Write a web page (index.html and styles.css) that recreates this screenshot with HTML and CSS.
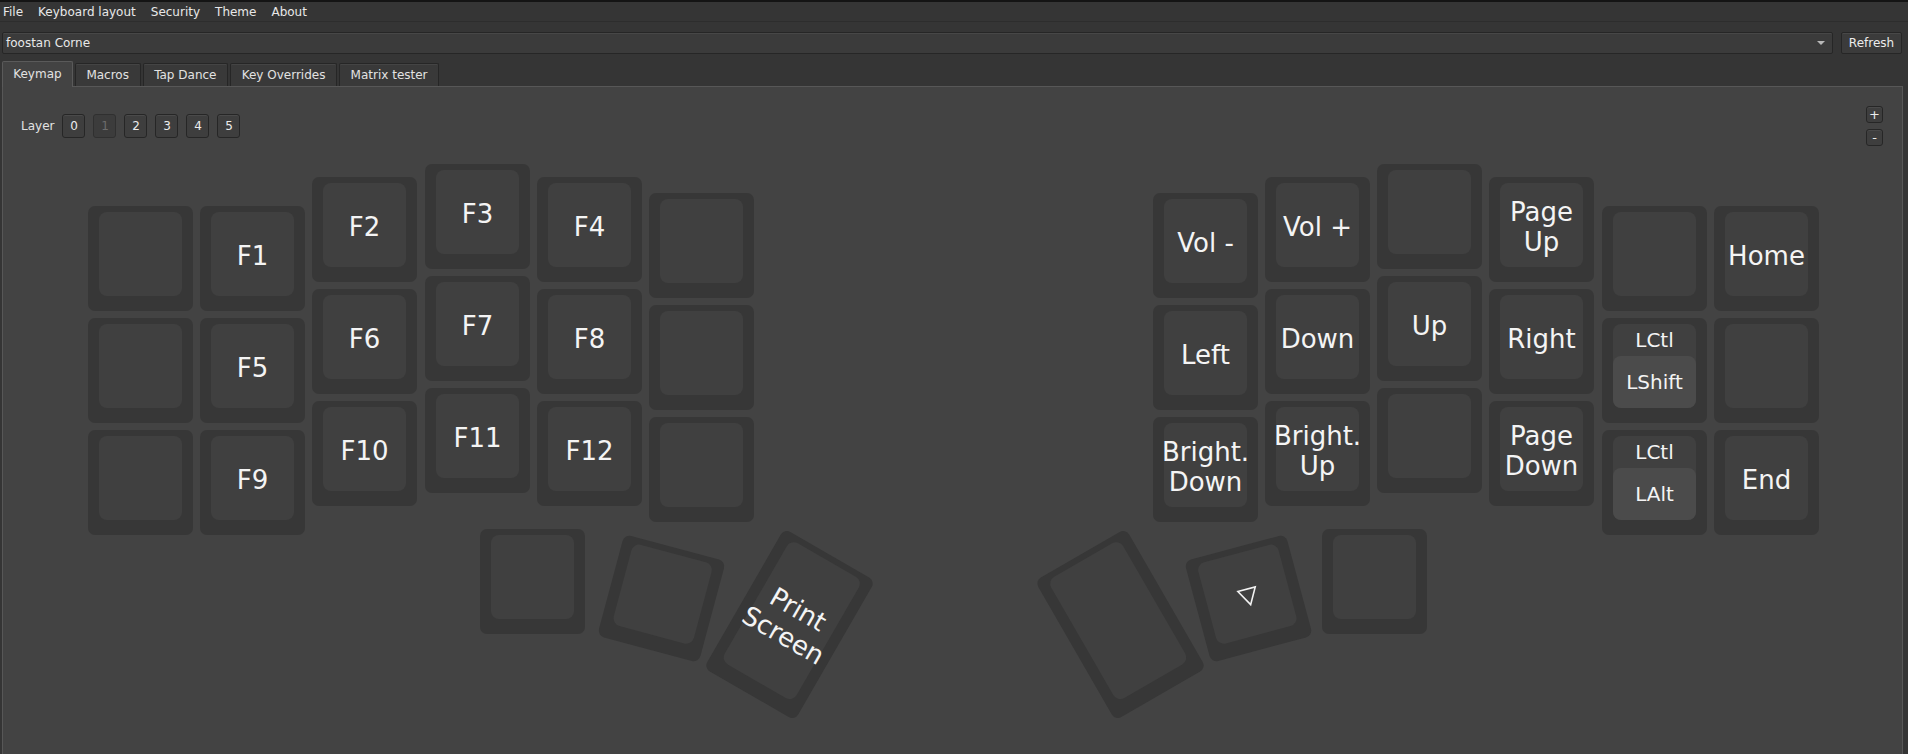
FILE: index.html
```html
<!DOCTYPE html>
<html>
<head>
<meta charset="utf-8">
<link rel="stylesheet" href="styles.css">
</head>
<body>
<div class="topline"></div>
<div class="menubar">
  <span class="menu">File</span>
  <span class="menu">Keyboard layout</span>
  <span class="menu">Security</span>
  <span class="menu">Theme</span>
  <span class="menu">About</span>
</div>
<div class="devrow">
  <div class="combo"><span>foostan Corne</span><span class="arrow"></span></div>
  <button class="btn refresh">Refresh</button>
</div>
<div class="tabs">
  <div class="tab active">Keymap</div>
  <div class="tab">Macros</div>
  <div class="tab">Tap Dance</div>
  <div class="tab">Key Overrides</div>
  <div class="tab">Matrix tester</div>
</div>
<div class="panel">
  <div class="panel-top">
    <div class="layers">
      <span class="layer-label">Layer</span>
      <button class="lbtn">0</button>
      <button class="lbtn disabled">1</button>
      <button class="lbtn">2</button>
      <button class="lbtn">3</button>
      <button class="lbtn">4</button>
      <button class="lbtn">5</button>
    </div>
    <div class="zoom">
      <button class="zbtn">+</button>
      <button class="zbtn">-</button>
    </div>
  </div>
  <div class="keyboard">
    <!-- left half -->
    <div class="key" style="left:85px;top:56px"><div class="cap"></div></div>
    <div class="key" style="left:85px;top:168px"><div class="cap"></div></div>
    <div class="key" style="left:85px;top:280px"><div class="cap"></div></div>

    <div class="key" style="left:197px;top:56px"><div class="cap">F1</div></div>
    <div class="key" style="left:197px;top:168px"><div class="cap">F5</div></div>
    <div class="key" style="left:197px;top:280px"><div class="cap">F9</div></div>

    <div class="key" style="left:309px;top:27px"><div class="cap">F2</div></div>
    <div class="key" style="left:309px;top:139px"><div class="cap">F6</div></div>
    <div class="key" style="left:309px;top:251px"><div class="cap">F10</div></div>

    <div class="key" style="left:422px;top:14px"><div class="cap">F3</div></div>
    <div class="key" style="left:422px;top:126px"><div class="cap">F7</div></div>
    <div class="key" style="left:422px;top:238px"><div class="cap">F11</div></div>

    <div class="key" style="left:534px;top:27px"><div class="cap">F4</div></div>
    <div class="key" style="left:534px;top:139px"><div class="cap">F8</div></div>
    <div class="key" style="left:534px;top:251px"><div class="cap">F12</div></div>

    <div class="key" style="left:646px;top:43px"><div class="cap"></div></div>
    <div class="key" style="left:646px;top:155px"><div class="cap"></div></div>
    <div class="key" style="left:646px;top:267px"><div class="cap"></div></div>

    <!-- right half -->
    <div class="key" style="left:1150px;top:43px"><div class="cap">Vol -</div></div>
    <div class="key" style="left:1150px;top:155px"><div class="cap">Left</div></div>
    <div class="key" style="left:1150px;top:267px"><div class="cap">Bright.<br>Down</div></div>

    <div class="key" style="left:1262px;top:27px"><div class="cap">Vol +</div></div>
    <div class="key" style="left:1262px;top:139px"><div class="cap">Down</div></div>
    <div class="key" style="left:1262px;top:251px"><div class="cap">Bright.<br>Up</div></div>

    <div class="key" style="left:1374px;top:14px"><div class="cap"></div></div>
    <div class="key" style="left:1374px;top:126px"><div class="cap">Up</div></div>
    <div class="key" style="left:1374px;top:238px"><div class="cap"></div></div>

    <div class="key" style="left:1486px;top:27px"><div class="cap">Page<br>Up</div></div>
    <div class="key" style="left:1486px;top:139px"><div class="cap">Right</div></div>
    <div class="key" style="left:1486px;top:251px"><div class="cap">Page<br>Down</div></div>

    <div class="key" style="left:1599px;top:56px"><div class="cap"></div></div>
    <div class="key" style="left:1599px;top:168px"><div class="cap mod"><div class="mod-top">LCtl</div><div class="mod-bot">LShift</div></div></div>
    <div class="key" style="left:1599px;top:280px"><div class="cap mod"><div class="mod-top">LCtl</div><div class="mod-bot">LAlt</div></div></div>

    <div class="key" style="left:1711px;top:56px"><div class="cap">Home</div></div>
    <div class="key" style="left:1711px;top:168px"><div class="cap"></div></div>
    <div class="key" style="left:1711px;top:280px"><div class="cap">End</div></div>

    <!-- thumbs -->
    <div class="key" style="left:477px;top:379px"><div class="cap"></div></div>
    <div class="key" style="left:605.5px;top:395.5px;transform:rotate(15deg)"><div class="cap"></div></div>
    <div class="key tall" style="left:733.5px;top:393.5px;transform:rotate(30deg)"><div class="cap">Print<br>Screen</div></div>

    <div class="key tall" style="left:1064.5px;top:393.5px;transform:rotate(-30deg)"><div class="cap"></div></div>
    <div class="key" style="left:1192.5px;top:396px;transform:rotate(-15deg)"><div class="cap"><svg class="tri" width="22" height="22" viewBox="0 0 22 22"><polygon points="2,4 20,4 11,20" fill="none" stroke="#f2f2f2" stroke-width="1.6" stroke-linejoin="miter"/></svg></div></div>
    <div class="key" style="left:1319px;top:379px"><div class="cap"></div></div>
  </div>
</div>
</body>
</html>
```
FILE: styles.css
```css
* { box-sizing: border-box; }
html, body {
  margin: 0;
  padding: 0;
  width: 1908px;
  height: 754px;
  overflow: hidden;
  background: #353535;
  font-family: "DejaVu Sans", "Liberation Sans", sans-serif;
  font-size: 12px;
  color: #e8e8e8;
}
body { display: flex; flex-direction: column; }
.topline { height: 2px; background: #141414; flex: none; }
.menubar {
  height: 20px;
  flex: none;
  display: flex;
  align-items: center;
  gap: 15px;
  padding-left: 3px;
  border-bottom: 1px solid #2d2d2d;
}
.menu { color: #e8e8e8; }
.devrow {
  flex: none;
  display: flex;
  gap: 8px;
  margin: 10px 6px 0 2px;
  height: 22px;
}
.combo {
  flex: 1;
  display: flex;
  align-items: center;
  justify-content: space-between;
  padding: 0 6px 0 3px;
  background: #3b3b3b;
  border: 1px solid #262626;
  border-radius: 2px;
  box-shadow: inset 0 1px 0 #474747;
}
.arrow {
  width: 0; height: 0;
  border-left: 4px solid transparent;
  border-right: 4px solid transparent;
  border-top: 4px solid #b8b8b8;
  margin-right: 1px;
}
.btn {
  font-family: inherit;
  font-size: 12px;
  color: #ececec;
  background: #3b3b3b;
  border: 1px solid #262626;
  border-radius: 2px;
  box-shadow: inset 0 1px 0 #484848;
  padding: 0;
}
.refresh { width: 61px; height: 22px; }
.tabs {
  flex: none;
  display: flex;
  align-items: flex-end;
  gap: 2px;
  margin: 7px 0 0 2px;
  height: 25px;
  position: relative;
  z-index: 1;
}
.tab {
  height: 23px;
  padding: 0 10.6px;
  display: flex;
  align-items: center;
  background: #393939;
  border: 1px solid #262626;
  border-bottom: none;
  border-radius: 2px 2px 0 0;
  color: #e2e2e2;
  box-shadow: inset 0 1px 0 #444;
}
.tab.active {
  height: 26px;
  margin-bottom: -1px;
  background: #434343;
  border-color: #5a5a5a;
  padding: 0 10.2px 2px;
  box-shadow: none;
}
.panel {
  flex: 1;
  margin: 0 5px 0 2px;
  background: #434343;
  border: 1px solid #575757;
  border-bottom: none;
  display: flex;
  flex-direction: column;
}
.panel-top {
  flex: none;
  height: 63px;
  display: flex;
  justify-content: space-between;
  padding: 19px 19px 0 18px;
}
.layers {
  display: flex;
  align-items: center;
  height: 24px;
  margin-top: 8px;
  gap: 8px;
}
.layer-label { color: #e2e2e2; }
.lbtn {
  width: 23px;
  height: 24px;
  font-family: inherit;
  font-size: 12px;
  color: #ececec;
  background: #3e3e3e;
  border: 1px solid #262626;
  border-radius: 3px;
  box-shadow: inset 0 1px 0 #4a4a4a;
  padding: 0;
}
.lbtn.disabled {
  color: #6c6c6c;
  background: #3c3c3c;
  border-color: #303030;
  box-shadow: none;
}
.zoom { display: flex; flex-direction: column; gap: 6px; }
.zbtn {
  width: 17px;
  height: 17px;
  font-family: inherit;
  font-size: 13px;
  line-height: 1;
  color: #ececec;
  background: #3e3e3e;
  border: 1px solid #262626;
  border-radius: 3px;
  box-shadow: inset 0 1px 0 #4a4a4a;
  padding: 0;
}
.keyboard {
  flex: 1;
  position: relative;
}
.key {
  position: absolute;
  width: 105px;
  height: 105px;
  background: #373737;
  border-radius: 7px;
  padding: 6px 11px 15px 11px;
}
.key.tall { height: 161px; }
.cap {
  width: 100%;
  height: 100%;
  background: #404040;
  border-radius: 8px;
  display: flex;
  align-items: center;
  justify-content: center;
  text-align: center;
  font-size: 26px;
  line-height: 30px;
  color: #f4f4f4;
  padding-top: 3px;
}
.cap.mod {
  flex-direction: column;
  justify-content: flex-start;
  align-items: stretch;
  padding-top: 0;
}
.mod-top {
  height: 32px;
  font-size: 20px;
  line-height: 32px;
}
.mod-bot {
  flex: 1;
  background: #4b4b4b;
  border-radius: 8px;
  font-size: 20px;
  display: flex;
  align-items: center;
  justify-content: center;
}
.tri { display: block; margin-top: 0; margin-left: 0; }
```
